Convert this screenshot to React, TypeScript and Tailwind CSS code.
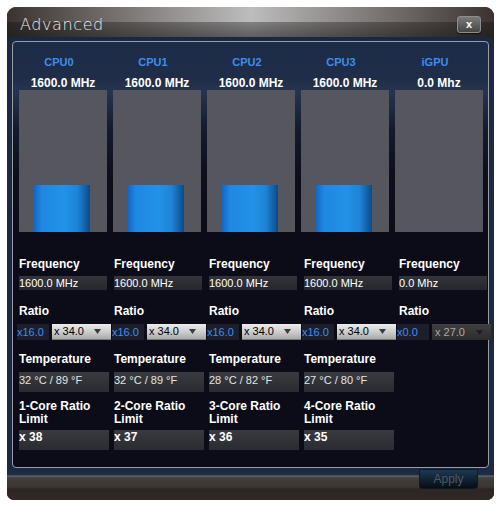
import React from "react";

const bars = [
  { name: "CPU0", mhz: "1600.0 MHz", fill: true },
  { name: "CPU1", mhz: "1600.0 MHz", fill: true },
  { name: "CPU2", mhz: "1600.0 MHz", fill: true },
  { name: "CPU3", mhz: "1600.0 MHz", fill: true },
  { name: "iGPU", mhz: "0.0 Mhz", fill: false },
];

const cols = [
  { freq: "1600.0 MHz", ratio: "x16.0", sel: "x 34.0", temp: "32 °C / 89 °F", core: "1-Core Ratio", lim: "x 38", gpu: false },
  { freq: "1600.0 MHz", ratio: "x16.0", sel: "x 34.0", temp: "32 °C / 89 °F", core: "2-Core Ratio", lim: "x 37", gpu: false },
  { freq: "1600.0 MHz", ratio: "x16.0", sel: "x 34.0", temp: "28 °C / 82 °F", core: "3-Core Ratio", lim: "x 36", gpu: false },
  { freq: "1600.0 MHz", ratio: "x16.0", sel: "x 34.0", temp: "27 °C / 80 °F", core: "4-Core Ratio", lim: "x 35", gpu: false },
  { freq: "0.0 Mhz", ratio: "x0.0", sel: "x 27.0", temp: "", core: "", lim: "", gpu: true },
];

function Tri({ color }: { color: string }) {
  return (
    <svg width="7" height="5" viewBox="0 0 7 5">
      <polygon points="0,0 7,0 3.5,5" fill={color} />
    </svg>
  );
}

export default function App() {
  return (
    <div
      className="w-[502px] h-[510px] bg-white pt-[7px] pl-[7px]"
      style={{ fontFamily: '"Liberation Sans", Arial, sans-serif' }}
    >
      <div className="w-[487px] h-[493px] rounded-t-[9px] rounded-b-[7px] overflow-hidden flex flex-col bg-[#1a2940]">
        {/* Title bar */}
        <div className="relative h-[30px] flex items-center justify-between pl-[13px] pr-[13px] pt-[3px] bg-[linear-gradient(to_right,#3a3330_0%,#7d7876_25%,#bdbdbd_50%,#7d7876_75%,#3a3330_100%)]">
          <div className="absolute inset-x-0 bottom-0 h-[15px] bg-[linear-gradient(to_bottom,rgba(20,18,18,0.35),rgba(20,18,18,0.55))]" />
          <span
            className="relative mt-[2px] text-[16px] leading-[20px] tracking-[0.6px] text-[#ececec] font-extralight"
            style={{ fontFamily: '"DejaVu Sans", sans-serif' }}
          >
            Advanced
          </span>
          <div className="relative mt-[2px] w-[24px] h-[17px] rounded-[3px] border border-[#8e8e8e] bg-[linear-gradient(to_bottom,#7a7a7a,#454545)] flex items-center justify-center text-white text-[11px] font-bold leading-none shadow-[0_1px_1px_rgba(0,0,0,0.6)]">
            x
          </div>
        </div>

        {/* Body */}
        <div className="px-[5px] pt-[4px]">
          <div className="h-[427px] rounded-[4px] border border-[#9a9ca2] bg-[linear-gradient(to_bottom,#1c2b47_0px,#1f2d48_35px,#263450_50px,#151c2e_85px,#0d0f1c_130px,#0b0c18_200px)] pl-[6px] pt-[13px]">
            {/* Top bars */}
            <div className="grid grid-cols-[repeat(5,88px)] gap-x-[6px]">
              {bars.map((b) => (
                <div key={b.name} className="flex flex-col">
                  <div className="h-[14px] leading-[14px] text-center pr-[8px] text-[11px] font-bold text-[#3d8ef0]">
                    {b.name}
                  </div>
                  <div className="mt-[7px] h-[14px] leading-[14px] text-center text-[12px] font-bold text-white">
                    {b.mhz}
                  </div>
                  <div className="h-[142px] w-[88px] bg-[#55565e] flex items-end">
                    {b.fill && (
                      <div className="ml-[15px] w-[56px] h-[47px] bg-[linear-gradient(to_right,#1366c4_0%,#1f88e2_14%,#2292e6_55%,#1d84d6_78%,#0b4a88_100%)]" />
                    )}
                  </div>
                </div>
              ))}
            </div>

            {/* Lower fields */}
            <div className="grid grid-cols-[repeat(5,88px)] gap-x-[7px]">
              {cols.map((c, i) => (
                <div key={i} className="flex flex-col">
                  <div className="mt-[25px] h-[14px] leading-[14px] text-[12px] font-bold text-white">
                    Frequency
                  </div>
                  <div className="mt-[5px] h-[14px] w-[88px] bg-[linear-gradient(to_bottom,#34353b,#26272c)] text-[11px] leading-[14px] text-white">
                    {c.freq}
                  </div>
                  <div className="mt-[14px] h-[14px] leading-[14px] text-[12px] font-bold text-white">
                    Ratio
                  </div>
                  <div className="mt-[6px] -ml-[2px] w-[94px] h-[16px] flex gap-[3px]">
                    <div className="w-[32px] h-[16px] bg-[#1c1e2b] text-[#3d8ef0] text-[11px] leading-[16px]">
                      {c.ratio}
                    </div>
                    {c.gpu ? (
                      <div className="w-[59px] h-[16px] bg-[linear-gradient(to_bottom,#404040,#2c2c2c)] flex items-center justify-between pl-[3px] pr-[8px] text-[11px] text-[#a8a8a8]">
                        <span>{c.sel}</span>
                        <Tri color="#1e1e1e" />
                      </div>
                    ) : (
                      <div className="w-[59px] h-[16px] bg-[linear-gradient(to_bottom,#ececec,#c8c8c8_60%,#a9a9a9)] border-b border-[#7a7a7a] flex items-center justify-between pl-[2px] pr-[10px] text-[11px] text-black">
                        <span>{c.sel}</span>
                        <Tri color="#3c3c3c" />
                      </div>
                    )}
                  </div>
                  {!c.gpu && (
                    <>
                      <div className="mt-[12px] h-[14px] leading-[14px] text-[12px] font-bold text-white">
                        Temperature
                      </div>
                      <div className="mt-[6px] h-[20px] w-[90px] bg-[linear-gradient(to_bottom,#3a3b41,#2a2b30)] text-[11px] leading-[17px] text-[#e4e4e4]">
                        {c.temp}
                      </div>
                      <div className="mt-[8px] text-[12px] leading-[13px] font-bold text-white">
                        <div>{c.core}</div>
                        <div>Limit</div>
                      </div>
                      <div className="mt-[4px] h-[20px] w-[90px] bg-[linear-gradient(to_bottom,#393a40,#2b2c31)] text-[12px] leading-[15px] font-bold text-white">
                        {c.lim}
                      </div>
                    </>
                  )}
                </div>
              ))}
            </div>
          </div>
        </div>

        {/* Footer */}
        <div className="flex-1 flex justify-end items-start pr-[16px] bg-[linear-gradient(to_bottom,#1a2940_0px,#1d2d46_7px,#707278_8px,#4a4542_9px,#3f3b38_12px,#3b3633_19px,#2d2623_21px,#2f2826_100%)]">
          <div className="mt-[1px] w-[59px] h-[20px] rounded-b-[3px] bg-[linear-gradient(to_bottom,#1b3a52,#0e1f2e_60%,#070d14)] border border-[#0a1a26] flex items-center justify-center text-[12px] text-[#4e5863]">
            Apply
          </div>
        </div>
      </div>
    </div>
  );
}
